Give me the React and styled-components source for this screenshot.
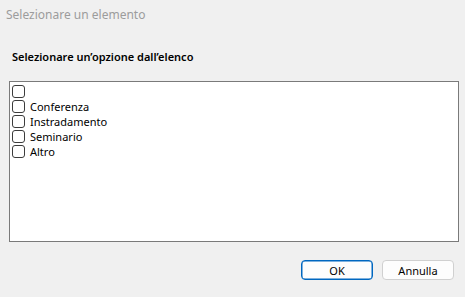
import styled, { createGlobalStyle } from "styled-components";

const GlobalStyle = createGlobalStyle`
  html, body {
    margin: 0;
    padding: 0;
    background: #f0f0f0;
  }
  * {
    box-sizing: border-box;
  }
`;

const options = ["", "Conferenza", "Instradamento", "Seminario", "Altro"];

const Dialog = styled.div`
  width: 465px;
  height: 297px;
  background: #f0f0f0;
  display: flex;
  flex-direction: column;
  font-family: "Segoe UI", "Noto Sans", "Open Sans", sans-serif;
  color: #000;
`;

const TitleBar = styled.div`
  height: 29px;
  line-height: 29px;
  padding-left: 6px;
  font-size: 12px;
  color: #9c9c9c;
`;

const Heading = styled.div`
  margin-top: 20px;
  padding-left: 12px;
  font-size: 11px;
  line-height: 15px;
  font-weight: 600;
`;

const ListBox = styled.div`
  margin: 17px 0 0 9px;
  width: 450px;
  height: 161px;
  background: #fff;
  border: 1px solid #7a7a7a;
  padding: 2px 0 0 2px;
  display: flex;
  flex-direction: column;
`;

const Row = styled.label`
  display: flex;
  align-items: center;
  height: 15px;
  gap: 5px;
  font-size: 11px;
  line-height: 15px;
`;

const Box = styled.span`
  width: 13px;
  height: 13px;
  border: 1px solid #3c3c3c;
  border-radius: 3px;
  background: #fff;
  flex: none;
`;

const Footer = styled.div`
  margin-top: 18px;
  padding-right: 11px;
  display: flex;
  justify-content: flex-end;
  gap: 9px;
`;

const Button = styled.button`
  width: 72px;
  height: 20px;
  padding: 0;
  font-family: inherit;
  font-size: 11px;
  color: #000;
  background: #fdfdfd;
  border: 1px solid ${(p) => (p.$primary ? "#0067c0" : "#d0d0d0")};
  border-radius: 4px;
  ${(p) => p.$primary && "box-shadow: inset 0 0 0 0.5px #0067c0;"}
`;

export default function App() {
  return (
    <>
      <GlobalStyle />
      <Dialog>
        <TitleBar>Selezionare un elemento</TitleBar>
        <Heading>Selezionare un’opzione dall’elenco</Heading>
        <ListBox>
          {options.map((o, i) => (
            <Row key={i}>
              <Box />
              {o}
            </Row>
          ))}
        </ListBox>
        <Footer>
          <Button $primary>OK</Button>
          <Button>Annulla</Button>
        </Footer>
      </Dialog>
    </>
  );
}
